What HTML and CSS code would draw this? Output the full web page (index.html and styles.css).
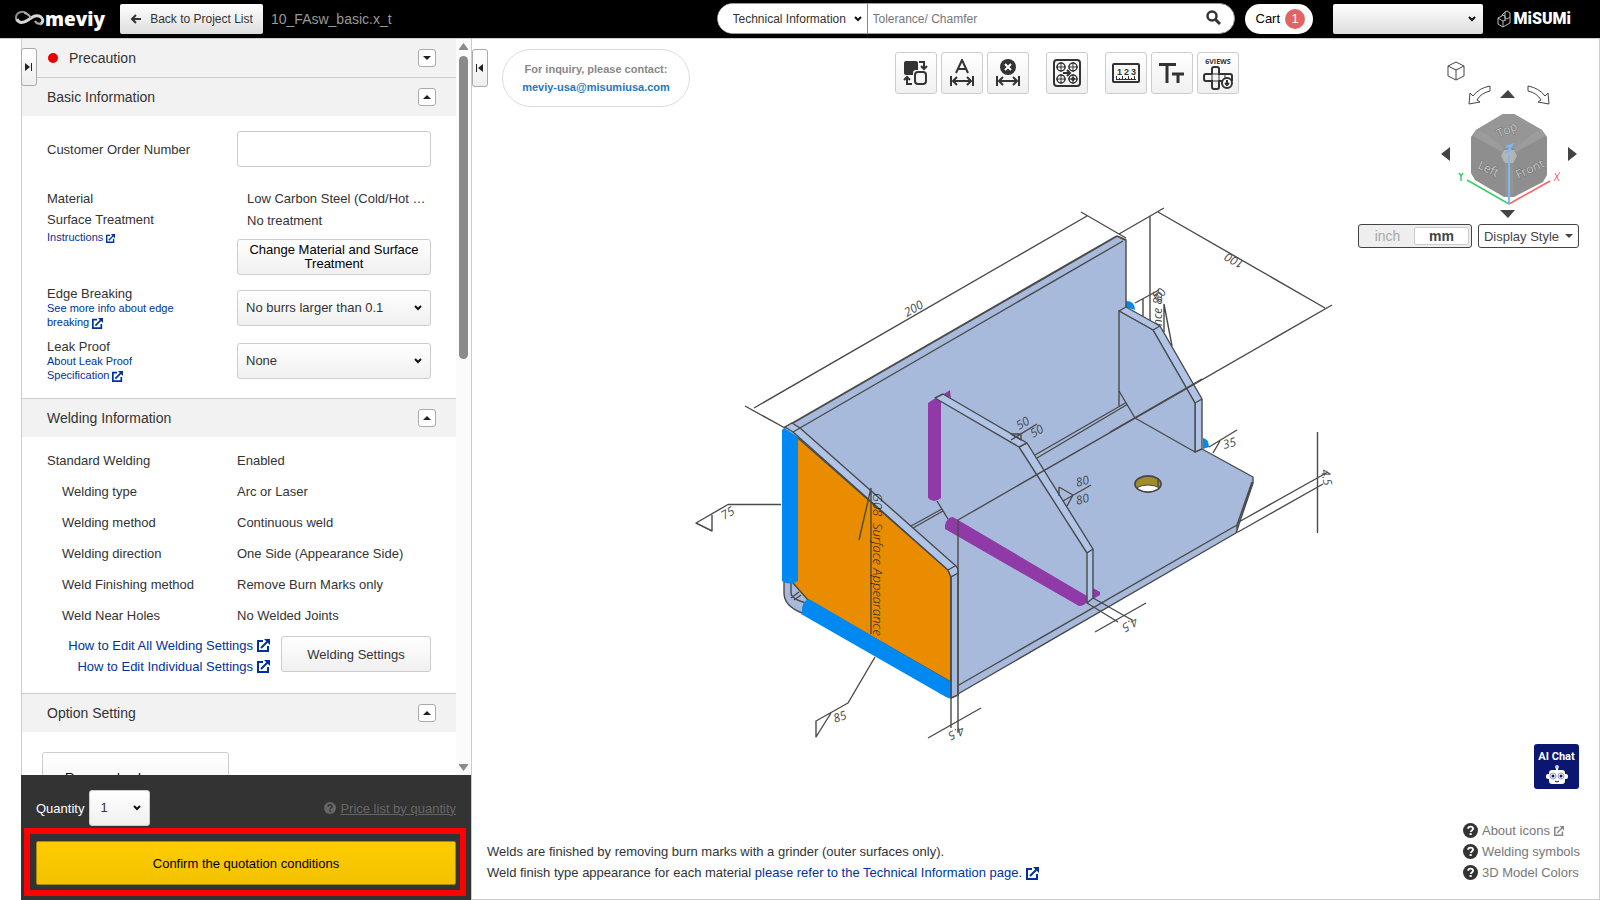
FILE: index.html
```html
<!DOCTYPE html>
<html lang="en">
<head>
    <meta charset="UTF-8">
    <title>meviy</title>
    <link rel="stylesheet" href="styles.css">
</head>
<body>
    <svg class="defs" aria-hidden="true">
        <symbol id="ext" viewBox="0 0 13 13">
            <path d="M6 2H1v10h10V7" fill="none" stroke="currentColor" stroke-width="2"/>
            <path d="M4 9l7-7" fill="none" stroke="currentColor" stroke-width="2"/>
            <path d="M7 0h6v6z" fill="currentColor"/>
        </symbol>
        <symbol id="help" viewBox="0 0 16 16">
            <circle cx="8" cy="8" r="8" fill="currentColor"/>
            <path d="M5.500 6.200c0-3.200 5.200-3.200 5.200 0 0 1.700-2.500 1.700-2.500 3.400" fill="none" stroke="var(--mark, #fff)" stroke-width="2"/>
            <rect x="7" y="10.800" width="2.300" height="2" fill="var(--mark, #fff)"/>
        </symbol>
        <symbol id="span" viewBox="0 0 24 12">
            <path d="M1 1v10M23 1v10M3 6h18M7 2L3 6l4 4M17 2l4 4-4 4" fill="none" stroke="#333" stroke-width="2"/>
        </symbol>
    </svg>

    <header class="header">
        <div class="logo">
            <svg width="30" height="18" viewBox="0 0 30 18">
                <path d="M12 4C8 0 1 2 1 8c0 5 7 5 11 2" fill="none" stroke="#8f8d92" stroke-width="2"/>
                <path d="M2 9c2 5 7 4 11 1s8-6 13-3c3 3 2 6-1 7" fill="none" stroke="#d8d6da" stroke-width="3"/>
                <path d="M9 3c3 0 5 2 7 5M26 14c-3 0-5-1-6-3" fill="none" stroke="#aaa" stroke-width="2"/>
            </svg>
            <span class="logo-text">meviy</span>
        </div>
        <button class="back-btn" type="button">
            <svg width="11" height="10" viewBox="0 0 11 10"><path d="M11 5H2M6 1L2 5l4 4" fill="none" stroke="#333" stroke-width="2"/></svg>
            Back to Project List
        </button>
        <span class="file-name">10_FAsw_basic.x_t</span>
        <div class="search">
            <select class="search-type" aria-label="Search target">
                <option>Technical Information</option>
            </select>
            <input class="search-input" type="text" placeholder="Tolerance/ Chamfer" aria-label="Search">
            <button class="search-btn" type="button" aria-label="Search">
                <svg width="15" height="15" viewBox="0 0 15 15"><circle cx="6" cy="6" r="4.500" fill="none" stroke="#333" stroke-width="2.500"/><path d="M9 9l5 5" stroke="#333" stroke-width="3"/></svg>
            </button>
        </div>
        <button class="cart" type="button">Cart <span class="cart-count">1</span></button>
        <select class="account" aria-label="Account"><option></option></select>
        <div class="misumi">
            <svg width="14" height="18" viewBox="0 0 14 18" fill="none" stroke="#bbb" stroke-width="1">
                <path d="M1 8l4-2v-1l3-3v6l2 1 3-2V3l-3-2-2 1M1 8v6l5 3V11L1 8M6 11l3-1M6 17l7-4V7M5 5l3 1v4"/>
            </svg>
            <span class="misumi-text">MiSUMi</span>
        </div>
    </header>

    <main class="main">
        <section class="panel">
            <button class="side-tab tab-left" type="button" aria-label="Hide panel">
                <svg width="8" height="8" viewBox="0 0 8 8"><path d="M0 0l5 4-5 4z" fill="#222"/><path d="M6.500 0v8" stroke="#222" stroke-width="1"/></svg>
            </button>
            <div class="panel-body">
                <div class="panel-content">
                    <div class="section-head">
                        <span class="dot"></span>
                        <h2>Precaution</h2>
                        <button class="toggle" type="button" aria-label="Open"><svg width="8" height="4" viewBox="0 0 8 4"><path d="M0 0h8L4 4z" fill="#222"/></svg></button>
                    </div>
                    <div class="section-head line">
                        <h2>Basic Information</h2>
                        <button class="toggle" type="button" aria-label="Close"><svg width="8" height="4" viewBox="0 0 8 4"><path d="M0 4h8L4 0z" fill="#222"/></svg></button>
                    </div>
                    <div class="section basic">
                        <div class="row center">
                            <label for="orderNo">Customer Order Number</label>
                            <input class="field" id="orderNo" type="text">
                        </div>
                        <div class="row material">
                            <div>
                                <div class="name">Material</div>
                                <div class="name">Surface Treatment</div>
                                <a class="small" href="#">Instructions <svg width="9" height="9"><use href="#ext"/></svg></a>
                            </div>
                            <div>
                                <div class="value">Low Carbon Steel (Cold/Hot …</div>
                                <div class="value">No treatment</div>
                                <button class="btn change-btn" type="button">Change Material and Surface Treatment</button>
                            </div>
                        </div>
                        <div class="row edge">
                            <div>
                                <label for="edge">Edge Breaking</label>
                                <a class="small" href="#">See more info about edge<br>breaking <svg width="11" height="11"><use href="#ext"/></svg></a>
                            </div>
                            <select class="field select" id="edge"><option>No burrs larger than 0.1</option></select>
                        </div>
                        <div class="row edge">
                            <div>
                                <label for="leak">Leak Proof</label>
                                <a class="small" href="#">About Leak Proof<br>Specification <svg width="11" height="11"><use href="#ext"/></svg></a>
                            </div>
                            <select class="field select" id="leak"><option>None</option></select>
                        </div>
                    </div>

                    <div class="section-head line">
                        <h2>Welding Information</h2>
                        <button class="toggle" type="button" aria-label="Close"><svg width="8" height="4" viewBox="0 0 8 4"><path d="M0 4h8L4 0z" fill="#222"/></svg></button>
                    </div>
                    <div class="section welding">
                        <dl class="weld-list">
                            <dt class="top">Standard Welding</dt><dd>Enabled</dd>
                            <dt>Welding type</dt><dd>Arc or Laser</dd>
                            <dt>Welding method</dt><dd>Continuous weld</dd>
                            <dt>Welding direction</dt><dd>One Side (Appearance Side)</dd>
                            <dt>Weld Finishing method</dt><dd>Remove Burn Marks only</dd>
                            <dt>Weld Near Holes</dt><dd>No Welded Joints</dd>
                        </dl>
                        <div class="weld-actions">
                            <div class="weld-links">
                                <a href="#">How to Edit All Welding Settings <svg width="13" height="13"><use href="#ext"/></svg></a>
                                <a href="#">How to Edit Individual Settings <svg width="13" height="13"><use href="#ext"/></svg></a>
                            </div>
                            <button class="btn weld-btn" type="button">Welding Settings</button>
                        </div>
                    </div>

                    <div class="section-head line">
                        <h2>Option Setting</h2>
                        <button class="toggle" type="button" aria-label="Close"><svg width="8" height="4" viewBox="0 0 8 4"><path d="M0 4h8L4 0z" fill="#222"/></svg></button>
                    </div>
                    <div class="section option">
                        <button class="btn option-btn" type="button">Remove back</button>
                    </div>
                </div>
                <div class="scrollbar">
                    <svg width="9" height="7" viewBox="0 0 9 7"><path d="M4.500 0L9 6v1H0V6z" fill="#8b8b8b"/></svg>
                    <div class="thumb"></div>
                    <svg width="9" height="7" viewBox="0 0 9 7"><path d="M0 0h9v1L4.500 7 0 1z" fill="#8b8b8b"/></svg>
                </div>
            </div>
            <div class="panel-foot">
                <div class="quantity">
                    <label for="qty">Quantity</label>
                    <select class="field select qty" id="qty"><option>1</option></select>
                    <a class="price-link" href="#"><svg width="12" height="12"><use href="#help"/></svg><span>Price list by quantity</span></a>
                </div>
                <div class="confirm-frame">
                    <button class="confirm" type="button">Confirm the quotation conditions</button>
                </div>
            </div>
        </section>

        <section class="viewer">
            <svg class="model" viewBox="472 39 1127 860" role="img" aria-label="3D model">
                <g stroke="#4a4a4a" stroke-width="1.400" fill="none" stroke-linejoin="round">
                    <!-- symbols standing behind the plates -->
                    <path d="M1119 234L1164 208M1150 216V320M1143 299V316M1135 303L1159 290M1164 304V332M1164 304L1172 346"/>
                    <g class="dim"><text transform="translate(1162 326) rotate(-90)">nce 85</text><text transform="translate(1160 303) rotate(-60)">80</text></g>
                    <path d="M1126 301q9 0 9 9l-9-3z" fill="#0089f0" stroke="none"/>
                    <!-- back plate and floor -->
                    <path d="M785 427L1117 236 1126 240V403L1135 418 1195 452 1202 449 1253 477V483L1236 533 951 698 785 600z" fill="#a8badb" stroke="none"/>
                    <path d="M784 428L1117 236" stroke-width="2"/>
                    <path d="M1117 236L1126 240V307M793 432L1123 241M1119 234L1126 238"/>
                    <path d="M1117 236L1124 240 1126 239" stroke-width="1"/>
                    <path d="M1035 455L1127 402M1037 458L1128 404M911 526L942 509M913 528L943 511M937 501L948 519"/>
                    <path d="M952 689L1237 525 1252 482M951 698L1236 533 1253 483V477L1202 449M1237 525V533"/>
                    <!-- hole -->
                    <ellipse cx="1148" cy="484" rx="13" ry="8" fill="#a08c25"/>
                    <path d="M1136 488q12-6 24 0-12 9-24 0z" fill="#fff" stroke-width="1"/>
                    <path d="M1158 478v9"/>
                    <ellipse cx="1148" cy="484" rx="13" ry="8"/>
                    <!-- rear gusset -->
                    <path d="M1203 438q6 1 6 9l-6 2z" fill="#0089f0" stroke="none"/>
                    <path d="M1119 311L1126 307 1160 326 1202 399V449L1195 452 1195 403 1153 330z" fill="#b0c4e8"/>
                    <path d="M1119 311L1153 330 1195 403V452L1135 418 1119 391z" fill="#a8badb"/>
                    <path d="M1119 391V406M1153 330L1160 326M1195 403L1202 399M1110 432L1202 379"/>
                    <!-- middle gusset -->
                    <path d="M944 394L950 390 951 400 944 400zM928 403L934 399H941V498q-7 6-13 0z" fill="#8f3aa6" stroke="none"/>
                    <path d="M1093 588L1100 592V595L1093 599z" fill="#8f3aa6" stroke="none"/>
                    <path d="M945 525Q947 517 953 517L1087 596V602Q1084 606 1079 606L945 529z" fill="#8f3aa6" stroke="none"/>
                    <path d="M935 398L943 394 1027 443 1093 549V598L1087 603V553L1019 447z" fill="#b0c4e8"/>
                    <path d="M1019 447L1027 443M1087 553L1093 549"/>
                    <!-- front plate -->
                    <path d="M784 578V593Q784 606 802 613L806 603Q791 599 791 593V578z" fill="#a8badb"/>
                    <path d="M791 598L799 592M794 600L801 595"/>
                    <path d="M798 438L948 570 951 577V682L808 600 793 583V438z" fill="#ea8c00"/>
                    <path d="M785 427L792 423 800 428 956 566Q959 569 958 574L951 577 948 570 793 432z" fill="#b0c4e8"/>
                    <path d="M951 577L958 573V695L951 698z" fill="#a8badb"/>
                    <path d="M948 570L955 566M793 432L800 428"/>
                    <path d="M784 428L798 437V581q-8 5-16 0V430z" fill="#0089f0" stroke="none"/>
                    <path d="M802 611Q802 601 809 599L951 682V699L946 697 801 614z" fill="#0089f0" stroke="none"/>
                    <!-- dimension lines -->
                    <path d="M754 408L1087 216M745 406L785 428M1081 212L1119 234"/>
                    <path d="M1158 212L1325 308M958 733V520L1332 305"/>
                    <path d="M951 577V728M928 738L981 708"/>
                    <path d="M1317.500 432V533M1237 523L1328 472M1238 532L1323 484"/>
                    <path d="M1095 632L1146 603M1087 603L1118 622M1093 598L1132 620"/>
                    <path d="M781 504.500H728L696 523 712 531V515"/>
                    <path d="M875 657L848 703 816 721V737L831 713"/>
                    <path d="M871 488V634M871 488L859 540"/>
                    <path d="M1011 434H1021V440zM1011 440L1037 424M1059 487L1073 495 1067 506M1059 487V496M1063 501L1091 485"/>
                    <path d="M1209 447L1237 430M1213 453L1220 441"/>
                </g>
                <g class="dim">
                    <text transform="translate(907 317) rotate(-30)">200</text>
                    <text transform="translate(1245 262) rotate(210)">100</text>
                    <text transform="translate(724 520) rotate(-30)">75</text>
                    <text transform="translate(835 723) rotate(-20)">85</text>
                    <text transform="translate(1019 430) rotate(-30)">50</text>
                    <text transform="translate(1033 438) rotate(-30)">50</text>
                    <text transform="translate(1077 487) rotate(-15)">80</text>
                    <text transform="translate(1077 505) rotate(-15)">80</text>
                    <text transform="translate(1224 449) rotate(-15)">35</text>
                    <text transform="translate(962 726) rotate(155)">4.5</text>
                    <text transform="translate(1135 617) rotate(150)">4.5</text>
                    <text transform="translate(1321 470) rotate(80)">4.5</text>
                    <text class="surface" transform="translate(873 493) rotate(90)">G08&#160; Surface Appearance</text>
                </g>
            </svg>

            <div class="viewer-top">
                <button class="side-tab" type="button" aria-label="Hide side">
                    <svg width="8" height="8" viewBox="0 0 8 8"><path d="M7 0L2 4l5 4z" fill="#222"/><path d="M.5 0v8" stroke="#222" stroke-width="1"/></svg>
                </button>
                <div class="inquiry">
                    <span>For inquiry, please contact:</span>
                    <a href="#">meviy-usa@misumiusa.com</a>
                </div>
                <div class="tools">
                    <div class="tool-group">
                        <button class="tool" type="button" aria-label="Swap">
                            <svg width="26" height="28" viewBox="0 0 26 28">
                                <path d="M3 2h10q2 0 2 2v7h-2q-3 0-3 3v2H3q-2 0-2-2V4q0-2 2-2z" fill="#333"/>
                                <rect x="12" y="13" width="11" height="12" rx="3" fill="none" stroke="#333" stroke-width="2"/>
                                <path d="M16 3h5v7M18 7l3 3 3-3M9 25H4v-7M1 21l3-3 3 3" fill="none" stroke="#333" stroke-width="2"/>
                            </svg>
                        </button>
                        <button class="tool" type="button" aria-label="Dimension text">
                            <svg width="24" height="28" viewBox="0 0 24 28">
                                <path d="M6 14L12 1l6 13M8 10h8" fill="none" stroke="#333" stroke-width="2"/>
                                <use href="#span" y="16" width="24" height="12"/>
                            </svg>
                        </button>
                        <button class="tool" type="button" aria-label="Delete dimension">
                            <svg width="24" height="28" viewBox="0 0 24 28">
                                <circle cx="12" cy="8" r="8" fill="#333"/>
                                <path d="M9 5l6 6M15 5l-6 6" stroke="#fff" stroke-width="2"/>
                                <use href="#span" y="16" width="24" height="12"/>
                            </svg>
                        </button>
                    </div>
                    <div class="tool-group">
                        <button class="tool" type="button" aria-label="Holes">
                            <svg width="28" height="28" viewBox="0 0 28 28" fill="none" stroke="#333">
                                <rect x="1" y="1" width="26" height="26" rx="3" stroke-width="2"/>
                                <g stroke-width="1.500"><circle cx="8" cy="8" r="4"/><circle cx="20" cy="8" r="4"/><circle cx="8" cy="20" r="4"/><circle cx="20" cy="20" r="4"/></g>
                                <path d="M8 3v10M3 8h10M20 3v10M15 8h10M8 15v10M3 20h10M20 15v10M15 20h10" stroke-width="1"/>
                                <circle cx="20" cy="20" r="1.500" fill="#333"/>
                                <path d="M10 14h7M14 11l3 3-3 3" stroke-width="2"/>
                            </svg>
                        </button>
                    </div>
                    <div class="tool-group">
                        <button class="tool" type="button" aria-label="Measure">
                            <svg width="28" height="20" viewBox="0 0 28 20">
                                <rect x="1" y="1" width="26" height="18" rx="1" fill="none" stroke="#333" stroke-width="2"/>
                                <path d="M4.500 17v-4M7.500 17v-2M10.500 17v-4M13.500 17v-2M16.500 17v-4M19.500 17v-2M22.500 17v-4M4 16.500h20" stroke="#333" stroke-width="1"/>
                                <text class="ruler-text" y="12"><tspan x="5">1</tspan><tspan x="12">2</tspan><tspan x="19">3</tspan></text>
                            </svg>
                        </button>
                        <button class="tool" type="button" aria-label="Text size">
                            <svg width="26" height="20" viewBox="0 0 26 20"><path d="M0 1.500h17M8 1v19M13 11h12M19 10v10" fill="none" stroke="#333" stroke-width="3"/></svg>
                        </button>
                        <button class="tool views" type="button">
                            <span>6VIEWS</span>
                            <svg width="30" height="24" viewBox="0 0 30 24" fill="none" stroke="#333" stroke-width="2">
                                <path d="M9 8V3q0-2 2-2h3q2 0 2 2v5h11q2 0 2 2v5M9 8H3q-2 0-2 2v3q0 2 2 2h6v6q0 2 2 2h3q2 0 2-2v-6h3"/>
                                <path d="M9 8v7M16 8v7M9 8h7M9 15h7M22 8v4" stroke-width="1"/>
                                <circle cx="24" cy="17" r="5" fill="#fff"/>
                                <path d="M24 14v5M22 17l2 2 2-2"/>
                            </svg>
                        </button>
                    </div>
                </div>
                <div class="nav">
                    <svg width="142" height="164" viewBox="1437 56 142 164" role="img" aria-label="View cube">
                        <g fill="#fff" stroke="#444" stroke-width="1">
                            <path d="M1456 62l8 4v10l-8 4-8-4V66zM1448 66l8 4 8-4M1456 70v10"/>
                            <path d="M1469 104L1470 93 1473 96Q1479 88 1490 86V91Q1481 93 1477 100L1480 102z"/>
                            <path d="M1549 104L1548 93 1545 96Q1539 88 1528 86V91Q1537 93 1541 100L1538 102z"/>
                        </g>
                        <path d="M1508 90l7 8h-15zM1500 210h15l-7 8zM1441 154l9-7v14zM1577 154l-9-7v14z" fill="#444"/>
                        <path d="M1503 114h11l28 16 5 7v38l-4 7-29 15h-10l-29-17-4-7v-36l5-7z" fill="#8e8e8e"/>
                        <path d="M1503 114h11l28 16-28 18h-10l-28-18z" fill="#969696"/>
                        <path d="M1476 130l5 1 23 17-2 4-29-16z" fill="#9c9c9c"/>
                        <path d="M1542 130l-5 1-23 17 2 4 29-16z" fill="#9c9c9c"/>
                        <path d="M1504 150h10l3 6-4 7h-8l-4-7z" fill="#b4b4b4"/>
                        <path d="M1505 163v34h8v-34z" fill="#949494"/>
                        <g class="cube-text">
                            <text transform="translate(1499 138) rotate(-25)">Top</text>
                            <text transform="translate(1477 168) rotate(25)">Left</text>
                            <text transform="translate(1518 179) rotate(-25)">Front</text>
                        </g>
                        <path d="M1509 204L1467 180" stroke="#38d060" stroke-width="1.500"/>
                        <path d="M1509 204L1550 181" stroke="#ff5f5f" stroke-width="1.500"/>
                        <path d="M1509 204V155" stroke="#7db8f5" stroke-width="2"/>
                        <path d="M1459 173l2 3 2-3M1461 176v5" stroke="#38d060" stroke-width="1.500" fill="none"/>
                        <path d="M1555 173l4 8M1560 172l-6 9" stroke="#ff5f5f" stroke-width="1"/>
                        <path d="M1506 147l6-2-5 7 5-2" stroke="#7db8f5" stroke-width="2" fill="none"/>
                    </svg>
                    <div class="nav-row">
                        <div class="units">
                            <button class="unit" type="button">inch</button>
                            <button class="unit active" type="button">mm</button>
                        </div>
                        <button class="display-btn" type="button">Display Style <svg width="8" height="4" viewBox="0 0 8 4"><path d="M0 0h8L4 4z" fill="#444"/></svg></button>
                    </div>
                </div>
            </div>

            <div class="viewer-bottom">
                <div class="notes">
                    <p>Welds are finished by removing burn marks with a grinder (outer surfaces only).</p>
                    <p>Weld finish type appearance for each material <a href="#">please refer to the Technical Information page. <svg width="13" height="13"><use href="#ext"/></svg></a></p>
                </div>
                <div class="help">
                    <button class="chat" type="button">
                        <span>AI Chat</span>
                        <svg width="22" height="20" viewBox="0 0 22 20">
                            <circle cx="11" cy="2" r="2" fill="#c9cfee"/><path d="M11 3v4" stroke="#fff" stroke-width="2"/>
                            <rect x="3" y="5" width="16" height="14" rx="3" fill="#fff"/><rect x="0" y="9" width="22" height="5" rx="2" fill="#fff"/>
                            <g fill="#fff" stroke="#8f9ad2" stroke-width="1"><circle cx="7" cy="11" r="3"/><circle cx="15" cy="11" r="3"/></g>
                            <circle cx="7" cy="11" r="1.500" fill="#0a1670"/><circle cx="15" cy="11" r="1.500" fill="#0a1670"/>
                            <path d="M9 16q2 2 4 0" stroke="#0a1670" fill="none"/>
                        </svg>
                    </button>
                    <div class="help-links">
                        <a href="#"><svg width="15" height="15"><use href="#help"/></svg>About icons <svg class="grey" width="10" height="10"><use href="#ext"/></svg></a>
                        <a href="#"><svg width="15" height="15"><use href="#help"/></svg>Welding symbols</a>
                        <a href="#"><svg width="15" height="15"><use href="#help"/></svg>3D Model Colors</a>
                    </div>
                </div>
            </div>
        </section>
    </main>
</body>
</html>
```
FILE: styles.css
```css
* {
    box-sizing: border-box;
}
body {
    margin: 0;
    height: 100vh;
    display: flex;
    flex-direction: column;
    overflow: hidden;
    font-family: "Liberation Sans", Arial, sans-serif;
    font-size: 13px;
    color: #333;
    background: #fff;
}
button, input, select {
    font-family: inherit;
    font-size: inherit;
    color: inherit;
    margin: 0;
}
button {
    padding: 0;
    cursor: pointer;
}
a {
    color: #003399;
    text-decoration: none;
}
h2, p, dl, dd {
    margin: 0;
}
.defs {
    display: none;
}

/* header */
.header {
    height: 39px;
    flex: none;
    display: flex;
    align-items: center;
    padding: 0 29px 1px 15px;
    background: #000;
    border-bottom: 1px solid #ccc;
}
.logo {
    display: flex;
    align-items: center;
    width: 105px;
    color: #fff;
}
.logo-text {
    font-family: "Open Sans", sans-serif;
    font-weight: 800;
    font-size: 19px;
    line-height: 30px;
}
.back-btn {
    width: 143px;
    height: 30px;
    display: flex;
    align-items: center;
    justify-content: center;
    gap: 9px;
    font-size: 12px;
    border: 0;
    border-radius: 2px;
    background: linear-gradient(#fff, #ddd);
}
.file-name {
    margin-left: 8px;
    font-size: 14px;
    color: #999;
}
.search {
    display: flex;
    width: 518px;
    height: 31px;
    margin-left: auto;
    background: #fff;
    border: 1px solid #999;
    border-radius: 16px;
    overflow: hidden;
    font-size: 12px;
}
.search-type, .account, .select {
    appearance: none;
    background-image: url("data:image/svg+xml,%3Csvg xmlns='http://www.w3.org/2000/svg' width='8' height='6'%3E%3Cpath d='M1 1l3 3 3-3' fill='none' stroke='%23111' stroke-width='2'/%3E%3C/svg%3E");
    background-repeat: no-repeat;
    background-position: right 5px center;
}
.search-type {
    width: 150px;
    padding: 0 0 0 15px;
    border: 0;
    border-right: 1px solid #888;
    background-color: #fff;
}
.search-input {
    flex: 1;
    padding: 0 5px;
    border: 0;
    outline: 0;
}
.search-input::placeholder {
    color: #777;
}
.search-btn {
    width: 40px;
    border: 0;
    background: none;
}
.cart {
    display: flex;
    align-items: center;
    gap: 5px;
    width: 68px;
    height: 30px;
    margin-left: 10px;
    padding-left: 11px;
    border: 0;
    border-radius: 15px;
    background: #fff;
    color: #000;
}
.cart-count {
    width: 20px;
    height: 20px;
    line-height: 19px;
    border-radius: 10px;
    background: #e06464;
    color: #fff;
}
.account {
    width: 150px;
    height: 30px;
    margin-left: 20px;
    border: 0;
    border-radius: 2px;
    background-color: #eee;
    background-image: url("data:image/svg+xml,%3Csvg xmlns='http://www.w3.org/2000/svg' width='8' height='6'%3E%3Cpath d='M1 1l3 3 3-3' fill='none' stroke='%23111' stroke-width='2'/%3E%3C/svg%3E"), linear-gradient(#fff, #ddd);
    background-position: right 7px center, 0 0;
}
.misumi {
    display: flex;
    align-items: center;
    gap: 3px;
    margin-left: 14px;
    color: #fff;
}
.misumi-text {
    font-family: Roboto, sans-serif;
    font-weight: 900;
    font-size: 16px;
}

/* left panel */
.main {
    flex: 1;
    min-height: 0;
    display: flex;
    padding-left: 21px;
}
.panel {
    position: relative;
    width: 451px;
    flex: none;
    display: flex;
    flex-direction: column;
    border-right: 1px solid #ccc;
}
.side-tab {
    display: flex;
    align-items: center;
    justify-content: center;
    flex: none;
    width: 16px;
    height: 38px;
    border: 1px solid #aaa;
    border-radius: 3px;
    background: linear-gradient(#fff, #eee);
}
.tab-left {
    position: absolute;
    left: 0;
    top: 9px;
}
.panel-body {
    flex: 1;
    min-height: 0;
    display: flex;
    overflow: hidden;
    border-left: 1px solid #ccc;
}
.panel-content {
    flex: 1;
}
.scrollbar {
    width: 15px;
    display: flex;
    flex-direction: column;
    align-items: center;
    padding: 4px 0;
    background: #fbfbfb;
}
.thumb {
    width: 9px;
    height: 303px;
    margin: 6px 0 auto;
    border-radius: 5px;
    background: #8b8b8b;
}
.section-head {
    display: flex;
    align-items: center;
    height: 38px;
    padding: 0 20px 0 25px;
    background: #f2f2f2;
}
.section-head.line {
    height: 39px;
    border-top: 1px solid #ccc;
}
.section-head h2 {
    font-size: 14px;
    font-weight: normal;
}
.dot {
    width: 10px;
    height: 10px;
    margin: 0 11px 0 1px;
    border-radius: 5px;
    background: #e80000;
}
.toggle {
    display: flex;
    align-items: center;
    justify-content: center;
    width: 18px;
    height: 18px;
    margin-left: auto;
    border: 1px solid #aaa;
    border-radius: 3px;
    background: #fff;
}
.section {
    padding: 0 25px;
}
.basic {
    padding-top: 15px;
    padding-bottom: 16px;
}
.row {
    display: grid;
    grid-template-columns: 190px 1fr;
}
.row.center {
    align-items: center;
}
.row.material {
    margin-top: 21px;
}
.row.edge {
    margin-top: 11px;
}
.row.edge .field {
    margin-top: 4px;
}
.row.edge label {
    display: block;
    line-height: 15px;
}
.row.edge + .row.edge {
    margin-top: 10px;
}
.name {
    line-height: 21px;
}
.value {
    padding-left: 10px;
    line-height: 22px;
}
.small {
    display: block;
    font-size: 11px;
    line-height: 14px;
}
a svg {
    vertical-align: middle;
}
.field {
    width: 100%;
    height: 36px;
    padding: 0 8px;
    border: 1px solid #ccc;
    border-radius: 3px;
}
.field.select {
    padding-bottom: 2px;
}
.select {
    background-color: #fff;
    background-image: url("data:image/svg+xml,%3Csvg xmlns='http://www.w3.org/2000/svg' width='8' height='6'%3E%3Cpath d='M1 1l3 3 3-3' fill='none' stroke='%23111' stroke-width='2'/%3E%3C/svg%3E"), linear-gradient(#fff, #f0f0f0);
    background-position: right 8px center, 0 0;
}
.btn {
    height: 36px;
    border: 1px solid #ccc;
    border-radius: 3px;
    background: linear-gradient(#fff, #f0f0f0);
}
.change-btn {
    width: 100%;
    margin-top: 7px;
    padding: 0 10px;
    line-height: 14px;
    color: #000;
}
.welding {
    padding-top: 8px;
    padding-bottom: 21px;
}
.weld-list {
    display: grid;
    grid-template-columns: 190px 1fr;
    line-height: 31px;
}
.weld-list dt {
    padding-left: 15px;
}
.weld-list dt.top {
    padding-left: 0;
}
.weld-actions {
    display: flex;
    align-items: center;
    justify-content: flex-end;
    gap: 11px;
    height: 36px;
    margin-top: 5px;
}
.weld-links {
    display: flex;
    flex-direction: column;
    align-items: flex-end;
    padding-top: 3px;
    line-height: 21px;
}
.weld-links a {
    display: flex;
    align-items: center;
    gap: 4px;
}
.weld-btn {
    width: 150px;
}
.option {
    padding: 20px;
}
.option-btn {
    display: block;
    width: 187px;
    height: 56px;
    padding: 0 0 6px 22px;
    text-align: left;
    color: #000;
}
.panel-foot {
    flex: none;
    padding: 15px 5px 4px 3px;
    background: #333;
    color: #fff;
}
.quantity {
    display: flex;
    align-items: center;
    gap: 5px;
    padding: 0 10px 0 12px;
}
.qty {
    width: 61px;
    padding: 0 10px;
    color: #333;
}
.price-link {
    display: flex;
    align-items: center;
    gap: 4px;
    margin-left: auto;
    color: #666;
    --mark: #333;
}
.price-link span {
    text-decoration: underline;
}
.confirm-frame {
    margin-top: 2px;
    padding: 7px 4px 5px 6px;
    border: 6px solid #f00;
}
.confirm {
    display: block;
    width: 100%;
    height: 44px;
    border: 1px solid #a88b00;
    border-radius: 2px;
    background: linear-gradient(#ffcc00, #f2c200);
    color: #000;
}

/* 3D viewer */
.viewer {
    position: relative;
    flex: 1;
    min-width: 0;
    display: flex;
    flex-direction: column;
    justify-content: space-between;
    border-right: 1px solid #ccc;
    border-bottom: 1px solid #ccc;
}
.model {
    position: absolute;
    inset: 0;
    width: 100%;
    height: 100%;
}
.dim {
    font-family: "Open Sans", sans-serif;
    font-size: 12px;
    font-weight: 400;
    font-style: italic;
    fill: #4a4a4a;
    stroke: none;
}
.dim .surface {
    font-size: 13px;
    font-weight: 300;
    fill: #222;
}
.viewer-top, .viewer-bottom {
    position: relative;
    display: flex;
}
.viewer-top {
    align-items: flex-start;
    padding: 10px 20px 0 0;
}
.inquiry {
    display: flex;
    flex-direction: column;
    align-items: center;
    justify-content: center;
    width: 188px;
    height: 58px;
    margin-left: 14px;
    border: 1px solid #ddd;
    border-radius: 29px;
    font-size: 11px;
    font-weight: bold;
    line-height: 18px;
    color: #888;
    background: #fff;
}
.inquiry a {
    color: #2a76bb;
}
.tools {
    display: flex;
    gap: 17px;
    margin: 3px 0 0 205px;
}
.tool-group {
    display: flex;
    gap: 4px;
}
.tool {
    display: flex;
    flex-direction: column;
    align-items: center;
    justify-content: center;
    width: 42px;
    height: 42px;
    border: 1px solid #ccc;
    border-radius: 3px;
    background: linear-gradient(#fff, #f0f0f0);
}
.ruler-text {
    font-size: 9px;
    font-weight: bold;
    fill: #333;
}
.views span {
    font-family: "Open Sans", sans-serif;
    font-size: 7px;
    font-weight: bold;
    line-height: 9px;
}
.nav {
    display: flex;
    flex-direction: column;
    align-items: flex-end;
    gap: 4px;
    margin: 7px 0 0 auto;
}
.cube-text {
    font-family: "Open Sans", sans-serif;
    font-size: 12px;
    fill: #c4c4c4;
    stroke: #777;
    stroke-width: 1px;
    paint-order: stroke;
}
.nav-row {
    display: flex;
    gap: 6px;
}
.units {
    display: flex;
    width: 114px;
    height: 24px;
    padding: 2px;
    border: 1px solid #444;
    border-radius: 3px;
    background: #eee;
}
.unit {
    flex: 1;
    border: 0;
    background: none;
    font-size: 14px;
    color: #aaa;
}
.unit.active {
    border: 1px solid #ccc;
    border-radius: 2px;
    background: #fff;
    font-weight: bold;
    color: #444;
}
.display-btn {
    display: flex;
    align-items: center;
    justify-content: center;
    gap: 6px;
    width: 101px;
    height: 24px;
    border: 1px solid #444;
    border-radius: 3px;
    background: #fff;
    color: #444;
}
.viewer-bottom {
    justify-content: space-between;
    align-items: flex-end;
    padding: 0 19px 16px 15px;
}
.notes {
    line-height: 21px;
}
.help {
    display: flex;
    flex-direction: column;
    align-items: flex-end;
    gap: 31px;
}
.chat {
    display: flex;
    flex-direction: column;
    align-items: center;
    width: 45px;
    height: 45px;
    margin-right: 1px;
    padding-top: 5px;
    border: 0;
    border-radius: 3px;
    background: #0a1670;
    color: #fff;
    font-family: Roboto, sans-serif;
    font-size: 11px;
    font-weight: bold;
    line-height: 16px;
}
.help-links {
    display: flex;
    flex-direction: column;
    line-height: 21px;
}
.help-links a {
    display: flex;
    align-items: center;
    gap: 4px;
    color: #777;
}
.help-links svg {
    color: #333;
}
.help-links .grey {
    color: #888;
}
```
